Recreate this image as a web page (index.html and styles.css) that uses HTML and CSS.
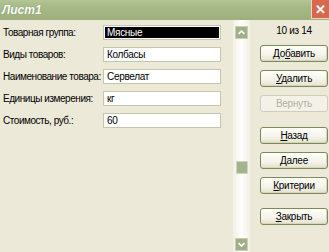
FILE: index.html
```html
<!DOCTYPE html>
<html lang="ru">
<head>
  <meta charset="UTF-8" />
  <title>Лист1</title>
  <link rel="stylesheet" href="styles.css">
</head>
<body>
  <div class="window">
    <div class="titlebar">
      <span class="title">Лист1</span>
      <span class="close">&#x2715;</span>
    </div>
    <div class="content">
      <div class="form">
        <div class="row"><span class="label">Товарная группа:</span><span class="field"><span class="selected">Мясные</span></span></div>
        <div class="row"><span class="label">Виды товаров:</span><span class="field">Колбасы</span></div>
        <div class="row"><span class="label">Наименование товара:</span><span class="field">Сервелат</span></div>
        <div class="row"><span class="label">Единицы измерения:</span><span class="field">кг</span></div>
        <div class="row"><span class="label">Стоимость, руб.:</span><span class="field">60</span></div>
      </div>
      <div class="scrollbar">
        <span class="arrow up"><svg width="7" height="5" viewBox="0 0 7 5"><path d="M0.5 4 L3.5 1 L6.5 4" fill="none" stroke="#fff" stroke-width="1.6"/></svg></span>
        <span class="thumb"></span>
        <span class="arrow down"><svg width="7" height="5" viewBox="0 0 7 5"><path d="M0.5 1 L3.5 4 L6.5 1" fill="none" stroke="#fff" stroke-width="1.6"/></svg></span>
      </div>
      <div class="buttons">
        <div class="counter">10 из 14</div>
        <button>До<u>б</u>авить</button>
        <button><u>У</u>далить</button>
        <button class="disabled">Вернуть</button>
        <button class="gap"><u>Н</u>азад</button>
        <button><u>Д</u>алее</button>
        <button><u>К</u>ритерии</button>
        <button class="gap2"><u>З</u>акрыть</button>
      </div>
    </div>
  </div>
</body>
</html>
```

FILE: styles.css
```css
body {
  margin: 0;
  padding: 0;
  font-family: "Liberation Sans", Arial, sans-serif;
  font-size: 10px;
  letter-spacing: -0.3px;
  background: #ece9d8;
  overflow: hidden;
}
.window {
  width: 329px;
  height: 252px;
  display: flex;
  flex-direction: column;
  background: #ece9d8;
}
.titlebar {
  height: 20px;
  display: flex;
  align-items: center;
  justify-content: space-between;
  background: linear-gradient(to bottom, #b4c596 0%, #a6b886 40%, #9db07c 100%);
}
.title {
  color: #fff;
  font-weight: bold;
  font-style: italic;
  font-size: 12px;
  letter-spacing: 0;
  padding-left: 2px;
  text-shadow: 0 0 1px #6d7e55;
}
.close {
  width: 17px;
  height: 18px;
  margin-top: -2px;
  background: #d8684d;
  border: 1px solid #f1d4c8;
  border-right: none;
  color: #fff;
  font-size: 13px;
  font-weight: bold;
  display: flex;
  align-items: center;
  justify-content: center;
}
.content {
  flex: 1;
  display: flex;
}
.form {
  width: 222px;
  padding: 5px 0 0 3px;
  display: flex;
  flex-direction: column;
  gap: 7px;
}
.row {
  display: flex;
  align-items: center;
  height: 15px;
}
.label {
  width: 100px;
  color: #000;
  white-space: nowrap;
  letter-spacing: -0.45px;
}
.field {
  width: 113px;
  height: 13px;
  border: 1px solid #c3c7ae;
  background: #fff;
  padding: 0 0 0 3px;
  line-height: 13px;
  display: flex;
}
.selected {
  flex: 1;
  margin: 1px 1px 1px -2px;
  padding-left: 2px;
  background: #000;
  color: #fff;
  line-height: 11px;
}
.scrollbar {
  width: 17px;
  margin-left: 8px;
  display: flex;
  flex-direction: column;
  align-items: center;
  padding-top: 6px;
  background: linear-gradient(to right, #f2f0e6, #fefefc 50%, #f2f0e6);
}
.arrow {
  width: 11px;
  height: 11px;
  background: #9fb088;
  border: 1px solid #c5d0b6;
  display: flex;
  align-items: center;
  justify-content: center;
}
.thumb {
  width: 10px;
  height: 11px;
  margin-top: 122px;
  background: #a3b48d;
  border: 1px solid #cdd6bf;
}
.down {
  margin-top: auto;
  margin-bottom: 1px;
}
.buttons {
  width: 68px;
  margin-left: 10px;
  display: flex;
  flex-direction: column;
  padding-top: 5px;
}
.counter {
  text-align: center;
  height: 13px;
  margin-bottom: 7px;
}
button {
  width: 68px;
  height: 17px;
  margin-bottom: 8px;
  padding: 0;
  font: inherit;
  letter-spacing: inherit;
  color: #000;
  border: 1px solid #7b8a5d;
  border-radius: 3px;
  background: linear-gradient(to bottom, #fffff9 0%, #f5f3ea 60%, #e4e1cf 100%);
  box-shadow: inset -1px -1px 0 #d9d5bd;
}
button.disabled {
  color: #b2b09e;
  border-color: #cfcdbc;
  background: #f4f2e8;
  box-shadow: none;
}
button.gap {
  margin-top: 7px;
}
button.gap2 {
  margin-top: 6px;
}
```
